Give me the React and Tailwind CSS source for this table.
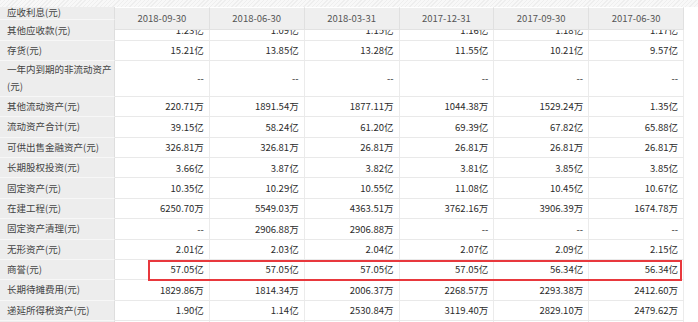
import React from "react";

const dates = ["2018-09-30", "2018-06-30", "2018-03-31", "2017-12-31", "2017-09-30", "2017-06-30"];

const rows = [
  { label: "应收利息(元)", values: ["--", "--", "--", "--", "--", "--"], first: true },
  { label: "其他应收款(元)", values: ["1.23亿", "1.09亿", "1.15亿", "1.16亿", "1.18亿", "1.17亿"] },
  { label: "存货(元)", values: ["15.21亿", "13.85亿", "13.28亿", "11.55亿", "10.21亿", "9.57亿"] },
  { label: "一年内到期的非流动资产(元)", values: ["--", "--", "--", "--", "--", "--"], tall: true },
  { label: "其他流动资产(元)", values: ["220.71万", "1891.54万", "1877.11万", "1044.38万", "1529.24万", "1.35亿"] },
  { label: "流动资产合计(元)", values: ["39.15亿", "58.24亿", "61.20亿", "69.39亿", "67.82亿", "65.88亿"] },
  { label: "可供出售金融资产(元)", values: ["326.81万", "326.81万", "26.81万", "26.81万", "26.81万", "26.81万"] },
  { label: "长期股权投资(元)", values: ["3.66亿", "3.87亿", "3.82亿", "3.81亿", "3.85亿", "3.85亿"] },
  { label: "固定资产(元)", values: ["10.35亿", "10.29亿", "10.55亿", "11.08亿", "10.45亿", "10.67亿"] },
  { label: "在建工程(元)", values: ["6250.70万", "5549.03万", "4363.51万", "3762.16万", "3906.39万", "1674.78万"] },
  { label: "固定资产清理(元)", values: ["--", "2906.88万", "2906.88万", "--", "--", "--"] },
  { label: "无形资产(元)", values: ["2.01亿", "2.03亿", "2.04亿", "2.07亿", "2.09亿", "2.15亿"] },
  { label: "商誉(元)", values: ["57.05亿", "57.05亿", "57.05亿", "57.05亿", "56.34亿", "56.34亿"] },
  { label: "长期待摊费用(元)", values: ["1829.86万", "1814.34万", "2006.37万", "2268.57万", "2293.38万", "2412.60万"] },
  { label: "递延所得税资产(元)", values: ["1.90亿", "1.14亿", "2530.84万", "3119.40万", "2829.10万", "2479.62万"] },
  { label: "", values: ["", "", "", "", "", ""] },
];

function Row({ label, values, tall, first }) {
  return (
    <div className={`flex ${tall ? "h-[35.6px]" : "h-[20.4px]"}`}>
      <div
        className={`w-[115px] shrink-0 flex pl-[7px] bg-[#ededed] border-r border-[#dedede] border-b border-b-[#f7f7f7] text-[#444] ${
          first ? "items-start pt-[6px] leading-[12px]" : "items-center leading-[17px]"
        }`}
      >
        {label}
      </div>
      <div className="grid grid-cols-6 w-[569px] border-b border-[#e9e9e9]">
        {values.map((v, i) => (
          <div key={i} className="flex items-center justify-end pr-[5px] border-r border-[#ebebeb] text-[#2b2b2b]">
            {v}
          </div>
        ))}
      </div>
    </div>
  );
}

export default function App() {
  return (
    <div className="relative w-[698px] h-[322px] overflow-hidden bg-white text-[9.5px] font-['Noto_Sans_CJK_SC','Noto_Sans',sans-serif]">
      <div className="flex flex-col">
        {rows.map((r, i) => (
          <Row key={i} {...r} />
        ))}
      </div>

      {/* sticky header over the scrolled rows */}
      <div className="absolute top-0 left-0 w-full h-[7px] bg-[repeating-linear-gradient(135deg,#eeeeee_0px,#eeeeee_1px,#f8f8f8_1px,#f8f8f8_3px)]" />
      <div className="absolute top-[8px] left-[115px] w-[569px] h-[21.5px] grid grid-cols-6 bg-[#efefef] border-b border-[#e2e2e2]">
        {dates.map((d) => (
          <div key={d} className="flex items-center justify-center border-r border-[#e0e0e0] text-[#555]">
            {d}
          </div>
        ))}
      </div>

      {/* highlight box */}
      <div className="absolute top-[260px] left-[148px] w-[534px] h-[20.5px] border-2 border-[#e8383d]" />
    </div>
  );
}
